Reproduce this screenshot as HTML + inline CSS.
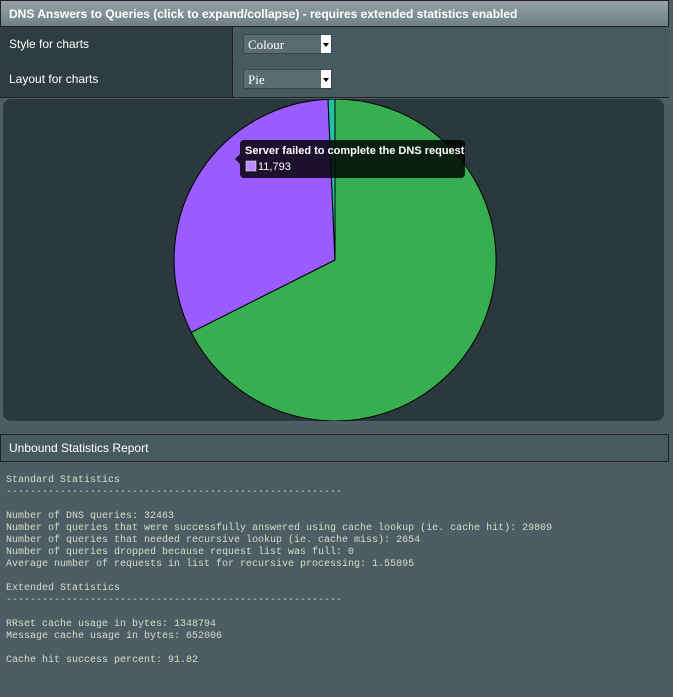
<!DOCTYPE html>
<html><head><style>
body{margin:0;width:673px;height:697px;background:#4d5d63;font-family:"Liberation Sans",sans-serif;overflow:hidden;position:relative}
.hdr{position:absolute;left:0;top:0;width:669px;height:27px;background:linear-gradient(#95a3a8,#6f7f85);border:1px solid #222;color:#fff;font-size:12px;font-weight:bold;line-height:27px;padding-left:8px;box-sizing:border-box}
.row{position:absolute;left:0;width:669px;height:35px;border-bottom:1px solid #222;font-size:12px;color:#fff}
.row .l{position:absolute;left:0;top:0;width:233px;height:35px;background:#2f3c41;border-right:1px solid #222;line-height:34px;padding-left:9px;box-sizing:border-box}
.row .r{position:absolute;left:234px;top:0;right:0;height:35px;background:#475a60}
.sel{position:absolute;left:9px;top:7px;width:89px;height:20px;background:#596c72;border:1px solid #3a484d;box-sizing:border-box;font-family:"Liberation Serif",serif;font-size:13px;line-height:19px;padding-left:4px;color:#fff}
.sel:after{content:"";position:absolute;right:0;top:0;width:10px;height:18px;background:#fff}
.sel b{position:absolute;right:2px;top:8px;width:0;height:0;border-left:3px solid transparent;border-right:3px solid transparent;border-top:4px solid #000;z-index:2}
.chart{position:absolute;left:3px;top:99px;width:661px;height:322px;background:#2b393e;border-radius:8px;overflow:hidden}
.rep{position:absolute;left:0;top:434px;width:669px;height:28px;background:#475a60;border:1px solid #222;color:#fff;font-size:12px;line-height:27px;padding-left:8px;box-sizing:border-box}
pre{position:absolute;left:6px;top:475px;margin:0;font-family:"Liberation Mono",monospace;font-size:10px;line-height:12px;color:#d8dcc8}
</style></head><body>
<div class="hdr">DNS Answers to Queries (click to expand/collapse) - requires extended statistics enabled</div>
<div class="row" style="top:27px"><div class="l">Style for charts</div><div class="r"><div class="sel">Colour<b></b></div></div></div>
<div class="row" style="top:62px"><div class="l">Layout for charts</div><div class="r"><div class="sel">Pie<b></b></div></div></div>
<div class="chart"><svg width="661" height="322" viewBox="3 99 661 322" style="display:block">
<path d="M335 260 L335 99 A161 161 0 1 1 191.2 332.3 Z" fill="#37af50" stroke="#000" stroke-width="1"/>
<path d="M335 260 L191.2 332.3 A161 161 0 0 1 328 99.2 Z" fill="#9b5cff" stroke="#000" stroke-width="1"/>
<path d="M335 260 L328 99.2 A161 161 0 0 1 335 99 Z" fill="#20c0a0" stroke="#000" stroke-width="1"/>
<rect x="240" y="140" width="225" height="38" rx="4" fill="rgba(0,0,0,0.82)"/>
<polygon points="240,154 235,159 240,164" fill="rgba(0,0,0,0.82)"/>
<text x="245" y="154" fill="#fff" font-size="11" font-weight="bold" font-family="Liberation Sans">Server failed to complete the DNS request</text>
<rect x="246" y="161" width="10" height="10" fill="#b58cff" stroke="#fff" stroke-width="0.5"/>
<text x="258" y="170" fill="#fff" font-size="11" font-family="Liberation Sans">11,793</text>
</svg></div>
<div class="rep">Unbound Statistics Report</div>
<pre>Standard Statistics
--------------------------------------------------------

Number of DNS queries: 32463
Number of queries that were successfully answered using cache lookup (ie. cache hit): 29809
Number of queries that needed recursive lookup (ie. cache miss): 2654
Number of queries dropped because request list was full: 0
Average number of requests in list for recursive processing: 1.55895

Extended Statistics
--------------------------------------------------------

RRset cache usage in bytes: 1348794
Message cache usage in bytes: 652006

Cache hit success percent: 91.82</pre>
</body></html>
